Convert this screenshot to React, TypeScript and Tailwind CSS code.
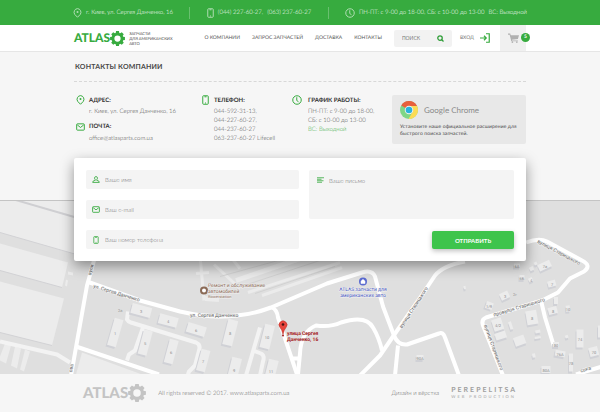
import React from 'react';

interface IconProps {
  className?: string;
}

interface Building {
  x: number;
  y: number;
  w: number;
  h: number;
  r: number;
  label?: string;
}

const PinIcon: React.FC<IconProps> = ({ className }) => (
  <svg viewBox="0 0 18 20" fill="none" stroke="currentColor" className={className}>
    <path d="M9 18.5 3.6 13A7.4 7.4 0 0 1 9 1.2 7.4 7.4 0 0 1 14.4 13Z" strokeWidth="2" strokeLinejoin="round" />
    <circle cx="9" cy="8" r="2" fill="currentColor" stroke="none" />
  </svg>
);

const PhoneIcon: React.FC<IconProps> = ({ className }) => (
  <svg viewBox="0 0 14 20" fill="none" stroke="currentColor" strokeWidth="2" className={className}>
    <rect x="1.5" y="1.5" width="11" height="17" rx="1.5" />
    <path d="M5 3.6h4M6 16h2" />
  </svg>
);

const ClockIcon: React.FC<IconProps> = ({ className }) => (
  <svg viewBox="0 0 20 20" fill="none" stroke="currentColor" strokeWidth="2" className={className}>
    <circle cx="10" cy="10" r="8.5" />
    <path d="M9.5 4.5V11l3.5 2.5" />
  </svg>
);

const MailIcon: React.FC<IconProps> = ({ className }) => (
  <svg viewBox="0 0 20 17" fill="none" stroke="currentColor" strokeWidth="2.2" className={className}>
    <rect x="1.5" y="1.5" width="17" height="14" rx="1.5" />
    <path d="m3 4 7 5.5L17 4" />
  </svg>
);

const UserIcon: React.FC<IconProps> = ({ className }) => (
  <svg viewBox="0 0 20 18" fill="none" stroke="currentColor" strokeWidth="2.2" strokeLinejoin="round" className={className}>
    <path d="M10 1.5c-5 0-4.500 6-1.800 8.200v1.500L3 12.800 1.500 16.500h17L17 12.800l-5.200-1.600V9.700C14.500 7.500 15 1.500 10 1.500Z" />
  </svg>
);

const LinesIcon: React.FC<IconProps> = ({ className }) => (
  <svg viewBox="0 0 14 12" stroke="currentColor" strokeWidth="2" className={className}>
    <path d="M0 1.500h14M0 4.500h9M0 7.500h13M0 10.500h10" />
  </svg>
);

const Gear: React.FC<IconProps> = ({ className }) => (
  <svg viewBox="-12 -12 24 24" fill="currentColor" className={className}>
    <circle r="7.200" fill="none" stroke="currentColor" strokeWidth="4.400" />
    {[0, 45, 90, 135, 180, 225, 270, 315].map((angle) => (
      <path key={angle} d="M-3.300-7-2.300-11.900H2.300L3.300-7Z" transform={`rotate(${angle})`} />
    ))}
  </svg>
);

const ChromeLogo: React.FC<IconProps> = ({ className }) => (
  <svg viewBox="0 0 36 36" className={className}>
    <circle cx="18" cy="18" r="18" fill="#7fd686" />
    <path d="M18 18 2.400 9A18 18 0 0 1 33.600 9L34 10H18Z" fill="#e8603c" />
    <path d="M18 10h16.100A18 18 0 0 1 17 36l8-14Z" fill="#fbdc55" />
    <circle cx="18" cy="18" r="8.500" fill="#f2f2f2" />
    <circle cx="18" cy="18" r="6.600" fill="#29b2dd" />
  </svg>
);

const navLinks = ['О КОМПАНИИ', 'ЗАПРОС ЗАПЧАСТЕЙ', 'ДОСТАВКА', 'КОНТАКТЫ'];

const buildings: Building[] = [
  { x: 141, y: 311, w: 20, h: 10, r: 15, label: '3' },
  { x: 168, y: 321, w: 19, h: 10, r: 15, label: '4' },
  { x: 196, y: 330, w: 19, h: 10, r: 17, label: '6' },
  { x: 115, y: 333, w: 9, h: 28, r: 16, label: '1' },
  { x: 145, y: 343, w: 9, h: 25, r: 15, label: '5' },
  { x: 171, y: 352, w: 9, h: 24, r: 15, label: '6' },
  { x: 230, y: 333, w: 10, h: 26, r: 14, label: '8' },
  { x: 203, y: 361, w: 9, h: 22, r: 15, label: '7' },
  { x: 234, y: 370, w: 10, h: 24, r: 14, label: '9' },
  { x: 267, y: 337, w: 10, h: 24, r: 14, label: '10' },
  { x: 271, y: 371, w: 10, h: 22, r: 14, label: '11' },
  { x: 498, y: 325, w: 10, h: 12, r: -18, label: '4/2' },
  { x: 501, y: 336, w: 11, h: 7, r: -18 },
  { x: 511, y: 326, w: 3, h: 8, r: -18 },
  { x: 532, y: 318, w: 11, h: 14, r: -10, label: '8' },
  { x: 520, y: 341, w: 11, h: 9, r: -20 },
  { x: 538, y: 332, w: 5, h: 3, r: -10 },
  { x: 538, y: 338, w: 6, h: 2, r: -10 },
  { x: 534, y: 356, w: 3, h: 4, r: -10 },
  { x: 545, y: 266, w: 13, h: 7, r: -25, label: '7а' },
  { x: 536, y: 264, w: 3, h: 3, r: -25 },
  { x: 532, y: 269, w: 4, h: 4, r: -25 },
  { x: 531, y: 280, w: 4, h: 4, r: -25 },
  { x: 517, y: 266, w: 6, h: 4, r: 0, label: '6А' },
  { x: 522, y: 278, w: 5, h: 5, r: 0, label: '6Б' },
  { x: 552, y: 284, w: 8, h: 6, r: -15, label: '7' },
  { x: 505, y: 296, w: 9, h: 7, r: -25, label: '3' },
  { x: 489, y: 306, w: 7, h: 7, r: 20, label: '1/9' },
  { x: 556, y: 301, w: 4, h: 7, r: 0 },
  { x: 553, y: 311, w: 9, h: 7, r: -15, label: '8' },
  { x: 568, y: 309, w: 4, h: 6, r: -5, label: '10' },
  { x: 580, y: 339, w: 7, h: 18, r: 0, label: '74' },
  { x: 594, y: 352, w: 9, h: 9, r: -15, label: '70' },
  { x: 600, y: 332, w: 4, h: 12, r: 0 },
  { x: 556, y: 345, w: 6, h: 5, r: 0, label: '80' },
  { x: 560, y: 354, w: 10, h: 6, r: 10, label: '76А' },
  { x: 571, y: 363, w: 4, h: 18, r: 0, label: '78' },
  { x: 546, y: 370, w: 9, h: 7, r: 0, label: '80А' },
  { x: 567, y: 337, w: 3, h: 3, r: -20 },
  { x: 420, y: 358, w: 7, h: 5, r: 0, label: '90А' },
  { x: 465, y: 288, w: 2, h: 3, r: -15 },
];

const streets = [
  { x: 93, y: 287, r: 17, text: 'ул. Сергея Данченко' },
  { x: 190, y: 316, r: 0, text: 'ул. Сергея Данченко' },
  { x: 402, y: 328, r: -57, text: 'вулиця Старицького' },
  { x: 484, y: 325, r: 70, text: 'вулиця Старицького' },
  { x: 494, y: 316, r: -17, text: 'провулок Старицького' },
  { x: 537, y: 242, r: 28, text: 'вулиця Старицького' },
  { x: 91, y: 275, r: -76, text: 'вули' },
  { x: 72, y: 372, r: -80, text: 'ова' },
  { x: 581, y: 372, r: -18, text: 'ська' },
];

const CityMap = () => (
  <svg
    viewBox="0 200 600 174"
    preserveAspectRatio="xMidYMid slice"
    className="block h-[173px] w-full bg-[#dfdfdf] font-['Roboto',sans-serif] font-normal"
    role="img"
    aria-label="Карта"
  >
    {/* Blocks */}
    <g fill="#ececec">
      <path d="M0 200H80V255L0 232Z" />
      <path d="M0 243 68 262 62 287 0 270Z" />
      <path d="M0 281 64 298 52 345 0 332Z" />
      <path d="m82 352 60 22H76Z" />
      <path d="m5 343 6 2-5 18-6-3v-4ZM15 346l6 2-4 20-6-3ZM25 349l5 2-6 20-4-2Z" />
      <path d="m68 271 5 1v3l-5-1ZM66 279l2 1-1 6-2-1Z" />
    </g>
    <path d="m0 232 80 23M0 270l62 17M0 332l52 13" fill="none" stroke="#d2d2d5" strokeWidth="1" />
    <path d="m14 199 62 18" fill="none" stroke="#cfcfd2" strokeWidth="2" />

    {/* Yards and lanes */}
    <g fill="none" stroke="#ebebeb" strokeWidth="3">
      <path d="m200 255 4 45M196 273l13-1M253 274l60-19M248 292l92-30M262 295l80-28M214 264l26 24M232 258l8 10" />
      <path d="m205 298 14 1M236 280l64-22" strokeWidth="5" />
    </g>
    <path d="m220 276 80-22M238 287l94-31M255 293l80-27" fill="none" stroke="#d2d2d2" strokeWidth="1" />
    <g fill="none" stroke="#f3f3f3" strokeWidth="4" strokeLinejoin="round">
      <path d="m0 341 57 13 13 8" />
      <path d="m128 311-1 8q1 2 4 3l65 20q5 2 3 8l-4 15-6 6-2 6" />
      <path d="m143 327-8 23-6 4-2 6" />
      <path d="m260 327-14 48M253 350l8 3q4 2 2 8l-3 14" />
    </g>

    {/* Roads */}
    <g fill="none" stroke="#fff" strokeWidth="4" strokeLinejoin="round">
      <path d="m94 260-7 25-16 90" />
      <path d="m87 281 53 19 40 11q30 7 57 4 15-1 34-8l56-24 35-11q10-3 13 4l8 30 11 29q4 10 13 9l32-11q4-2 6 4l14 38" />
      <path d="m272 307q5 2 6 10l19 57" />
      <path d="m298 374 2-21q1-22 16-28 14 2 25-3 25-8 32 5 6 10 9 23M293 358h7" />
      <path d="M465 261q-22 4-30 14l-12 18-30 43-13 19-20 20M398 345l-3 30" />
      <path d="M526 242q13-5 21-1l35 19q10 5 2 11l-14 7-12 14-16 8-56 17q-5 2-3 8l20 50" />
      <path d="m541 300 4 17 9 29M576 374l26-8M76 346l83 28" />
    </g>

    {/* Buildings */}
    {buildings.map((b, i) => (
      <g key={i}>
        <g transform={`rotate(${b.r} ${b.x} ${b.y})`}>
          <rect x={b.x - b.w / 2 - 1} y={b.y - b.h / 2 + 1} width={b.w} height={b.h} fill="#d0d1d6" />
          <rect x={b.x - b.w / 2} y={b.y - b.h / 2 - 1} width={b.w} height={b.h} fill="#ececec" />
        </g>
        {b.label && (
          <text x={b.x} y={b.y + 1} fontSize="4" fill="#8a8a8a" textAnchor="middle">
            {b.label}
          </text>
        )}
      </g>
    ))}
    <text x="118" y="311" fontSize="4" fill="#999">2а</text>
    <text x="513" y="295" fontSize="4" fill="#999">2г</text>
    <text x="530" y="281" fontSize="4" fill="#999">4</text>

    {/* Street names */}
    <g fontSize="5" fill="#666" stroke="#f5f5f5" strokeWidth="1" paintOrder="stroke">
      {streets.map((s, i) => (
        <text key={i} x={s.x} y={s.y} transform={`rotate(${s.r} ${s.x} ${s.y})`}>
          {s.text}
        </text>
      ))}
    </g>

    {/* Places */}
    <circle cx="204" cy="290" r="3" fill="#fff" stroke="#8b6b57" strokeWidth="2" />
    <g fill="#8b6b57" fontSize="5" stroke="#f0f0f0" strokeWidth="1" paintOrder="stroke">
      <text x="208" y="286">Ремонт и обслуживание</text>
      <text x="208" y="292">автомобилей</text>
      <text x="208" y="297" fontSize="4">Rowerstation</text>
    </g>
    <circle cx="363" cy="281" r="4" fill="#5b6bd0" />
    <path d="M361 281v2h4v-2M361 281q2-4 4 0Z" fill="#fff" stroke="#fff" strokeWidth="0.500" />
    <g fill="#4a59c4" fontSize="5" textAnchor="middle" stroke="#f0f0f0" strokeWidth="1" paintOrder="stroke">
      <text x="363" y="290">ATLAS запчасти для</text>
      <text x="363" y="296">американских авто</text>
    </g>
    <path d="M283 334q-1-5-3-7a4 4 0 1 1 6 0q-2 2-3 7Z" fill="#e8453c" stroke="#b5322b" strokeWidth="0.500" />
    <circle cx="283" cy="324" r="1.300" fill="#4a1210" />
    <circle cx="283" cy="335" r="1" fill="#a02020" />
    <g fill="#9c1c1c" fontSize="5" fontWeight="700" stroke="#f0dede" strokeWidth="0.500" paintOrder="stroke">
      <text x="287" y="334">улица Сергея</text>
      <text x="287" y="340">Данченко, 16</text>
    </g>
  </svg>
);

const fieldClass =
  'w-full min-w-0 bg-transparent text-[6px] leading-[9px] text-[#555] outline-none placeholder:text-[#707070]';

export default function App() {
  return (
    <div className="bg-[#f6f6f6] font-['Lato','Noto_Sans',sans-serif] text-[6px] leading-[9px] font-light text-[#484848] [text-rendering:geometricPrecision]">
      {/* Top bar */}
      <div className="flex h-[25px] items-center justify-between bg-[#37ab3f] px-[73px] text-white">
        <span className="flex items-center gap-1">
          <PinIcon className="h-[10px] w-[9px] opacity-60" />
          г. Киев, ул. Сергея Данченко, 16
        </span>
        <span className="h-3 w-px bg-white/25" />
        <span className="flex items-center gap-1">
          <PhoneIcon className="h-[10px] w-[7px] opacity-60" />
          <span>(044) 227-60-27,</span>
          <span>(063) 237-60-27</span>
        </span>
        <span className="h-3 w-px bg-white/25" />
        <span className="flex items-center gap-1">
          <ClockIcon className="size-[10px] opacity-60" />
          <span>ПН-ПТ: с 9-00 до 18-00, СБ: с 10-00 до 13-00</span>
          <span>ВС: Выходной</span>
        </span>
      </div>

      {/* Header */}
      <header className="flex h-[27px] items-center justify-between border-b border-[#e6e6e6] bg-white px-[74px] text-[5px] font-normal">
        <div className="flex items-center gap-1">
          <a href="#home" className="flex items-center text-[12px] leading-4 font-black text-[#37ab3f]">
            ATLAS
            <Gear className="size-[15px]" />
          </a>
          <p className="text-[4px] leading-[5px]">
            ЗАПЧАСТИ
            <br />
            ДЛЯ АМЕРИКАНСКИХ
            <br />
            АВТО
          </p>
        </div>
        <nav className="ml-5 flex gap-3 text-[#555]">
          {navLinks.map((link) => (
            <a key={link} href="#nav">
              {link}
            </a>
          ))}
        </nav>
        <div className="flex h-full items-center">
          <form className="flex h-[17px] w-[58px] items-center rounded-xs bg-[#f2f2f2] px-2">
            <input
              type="search"
              aria-label="Поиск"
              placeholder="ПОИСК"
              className="w-full min-w-0 bg-transparent outline-none placeholder:text-[#777]"
            />
            <button type="button" aria-label="Найти" className="text-[#2f9d38]">
              <svg viewBox="0 0 14 14" fill="none" stroke="currentColor" strokeWidth="2.500" className="size-[7px]">
                <circle cx="6" cy="6" r="4.500" />
                <path d="m9 9 4 4" />
              </svg>
            </button>
          </form>
          <a href="#login" className="ml-2 flex items-center gap-[6px] text-[#777]">
            ВХОД
            <svg viewBox="0 0 20 20" fill="none" stroke="#37ab3f" strokeWidth="2.400" className="size-[10px]">
              <path d="M12 1.500h6.500v17H12M0 10h12M8 5.500l4.500 4.500L8 14.500" />
            </svg>
          </a>
          <a href="#cart" aria-label="Корзина" className="relative ml-[10px] flex h-full w-[26px] items-center bg-[#f0f0f0] pl-2">
            <svg viewBox="0 0 20 18" className="h-[10px] w-[11px] text-[#b0b0b0]" fill="currentColor">
              <path d="M0 1h4l1 3h15l-2 7-11 1 .5 1.500H18V15H6L3 3H0Z" />
              <circle cx="8" cy="16.500" r="1.500" />
              <circle cx="16" cy="16.500" r="1.500" />
            </svg>
            <span className="absolute top-2 -right-1 flex size-[9px] items-center justify-center rounded-full bg-[#37ab3f] leading-none font-bold text-white">
              5
            </span>
          </a>
        </div>
      </header>

      <main>
        {/* Contacts */}
        <section className="px-[74px] pt-[10px]">
          <h1 className="border-b border-dashed border-[#d8d8d8] pb-[9px] pl-px text-[7px] leading-[10px] font-bold tracking-wide text-[#484848]">
            КОНТАКТЫ КОМПАНИИ
          </h1>
          <div className="grid grid-cols-[126px_90px_1fr_134px] pt-[13px]">
            <div className="pl-[2px]">
              <h2 className="flex items-center gap-1 font-bold text-[#333]">
                <PinIcon className="h-[10px] w-[9px] text-[#37ab3f]" />
                АДРЕС:
              </h2>
              <p className="pt-[2px] pl-[13px]">г. Киев, ул. Сергея Данченко, 16</p>
              <h2 className="flex items-center gap-1 pt-[6px] font-bold text-[#333]">
                <MailIcon className="h-2 w-[9px] text-[#37ab3f]" />
                ПОЧТА:
              </h2>
              <p className="pt-[3px] pl-[13px]">office@atlasparts.com.ua</p>
            </div>
            <div className="pl-[2px]">
              <h2 className="flex items-center gap-[5px] font-bold text-[#333]">
                <PhoneIcon className="h-[10px] w-[7px] text-[#37ab3f]" />
                ТЕЛЕФОН:
              </h2>
              <p className="pt-[2px] pl-3 whitespace-nowrap">
                044-592-31-13,
                <br />
                044-227-60-27,
                <br />
                044-237-60-27
                <br />
                063-237-60-27 Lifecell
              </p>
            </div>
            <div className="pl-[2px]">
              <h2 className="flex items-center gap-[6px] font-bold text-[#333]">
                <ClockIcon className="size-[10px] text-[#37ab3f]" />
                ГРАФИК РАБОТЫ:
              </h2>
              <p className="pt-[2px] pl-4 whitespace-nowrap">
                ПН-ПТ: с 9-00 до 18-00,
                <br />
                СБ: с 10-00 до 13-00
                <br />
                <span className="text-[#37ab3f]">ВС: Выходной</span>
              </p>
            </div>
            <div className="h-[49px] rounded-xs bg-[#e8e8e8] px-2 pt-[6px] font-normal">
              <div className="flex items-center gap-[6px] text-[8px] text-[#8a8a8a]">
                <ChromeLogo className="size-[18px]" />
                Google Chrome
              </div>
              <p className="pt-[5px] text-[5px] leading-[7px] tracking-wide whitespace-nowrap text-[#444]">
                Установите наше официальное расширение для
                <br />
                быстрого поиска запчастей.
              </p>
            </div>
          </div>
        </section>

        {/* Feedback form */}
        <form className="relative z-10 mx-[74px] mt-[14px] grid grid-cols-[213fr_205fr] gap-[10px] rounded-xs bg-white p-3 shadow-[0_5px_14px_rgba(0,0,0,0.4)]">
          <div className="flex flex-col gap-[11px]">
            <label className="flex h-[19px] items-center gap-[5px] rounded-xs bg-[#f4f4f4] px-[6px]">
              <UserIcon className="h-[7px] w-[8px] shrink-0 text-[#37ab3f]" />
              <input type="text" aria-label="Ваше имя" placeholder="Ваше имя" className={fieldClass} />
            </label>
            <label className="flex h-[19px] items-center gap-[5px] rounded-xs bg-[#f4f4f4] px-[6px]">
              <MailIcon className="h-[7px] w-[8px] shrink-0 text-[#37ab3f]" />
              <input type="email" aria-label="Ваш e-mail" placeholder="Ваш e-mail" className={fieldClass} />
            </label>
            <label className="flex h-[19px] items-center gap-[5px] rounded-xs bg-[#f4f4f4] px-[6px]">
              <PhoneIcon className="h-[8px] w-[8px] shrink-0 text-[#37ab3f]" />
              <input type="tel" aria-label="Ваш номер телефона" placeholder="Ваш номер телефона" className={fieldClass} />
            </label>
          </div>
          <div className="flex flex-col items-end justify-between">
            <label className="flex h-[49px] w-full items-start gap-[5px] rounded-xs bg-[#f4f4f4] px-2 pt-[6px]">
              <LinesIcon className="mt-px h-[6px] w-[7px] shrink-0 text-[#5cb863]" />
              <textarea aria-label="Ваше письмо" placeholder="Ваше письмо" className={`${fieldClass} h-9 resize-none`} />
            </label>
            <button
              type="submit"
              className="h-[18px] w-[82px] rounded-xs bg-[#3ec44c] font-bold text-white shadow-[0_2px_5px_rgba(0,0,0,0.25)]"
            >
              ОТПРАВИТЬ
            </button>
          </div>
        </form>

        {/* Map */}
        <section className="-mt-[61px] border-t border-[#c4c4c4]">
          <CityMap />
        </section>
      </main>

      {/* Footer */}
      <footer className="flex h-[38px] items-center justify-between px-[83px] text-[#666]">
        <div className="flex items-center gap-3">
          <a href="#home" className="flex items-center text-[15px] leading-4 font-black text-[#c4c4c4]">
            ATLAS
            <Gear className="size-[18px]" />
          </a>
          <p>All rights reserved © 2017. www.atlasparts.com.ua</p>
        </div>
        <div className="flex items-center gap-3">
          <span>Дизайн и вёрстка</span>
          <a href="#studio" className="flex flex-col font-normal text-[#a0a0a0]">
            <span className="text-[7px] leading-[8px] font-bold tracking-[2px]">PEREPELITSA</span>
            <span className="text-[4px] leading-[6px] tracking-[2px]">WEB PRODUCTION</span>
          </a>
        </div>
      </footer>
    </div>
  );
}
